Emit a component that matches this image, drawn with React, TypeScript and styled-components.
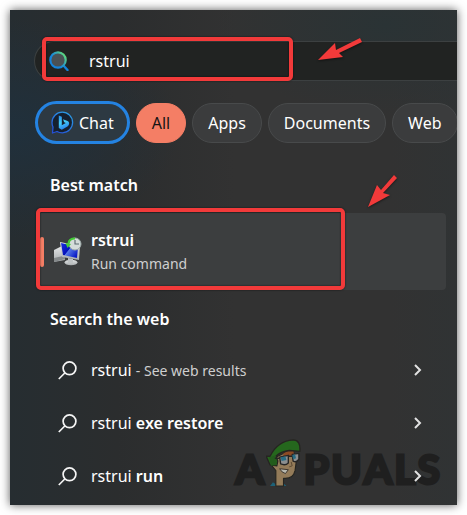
import React, { useState } from "react";
import styled, { createGlobalStyle } from "styled-components";

const RED = "#f23a3a";

const GlobalStyle = createGlobalStyle`
  *, *::before, *::after { box-sizing: border-box; }
  body {
    margin: 0;
    background: #fff;
    color: #fff;
    font-family: "Noto Sans", "Open Sans", sans-serif;
  }
  button, input { font: inherit; color: inherit; }
`;

const Page = styled.div`
  padding: 10px;
`;

const Panel = styled.main`
  position: relative;
  overflow: hidden;
  padding: 31px 0 3px 24px;
  background:
    radial-gradient(ellipse 170px 110px at 0 24%, #20303c 0%, rgba(32, 48, 60, 0) 100%),
    radial-gradient(ellipse 170px 90px at 84% 3%, #2a3335 0%, rgba(42, 51, 53, 0) 100%),
    linear-gradient(90deg, #262d31 0%, #2b2d2e 24%, #323232 50%, #323232 85%, #303334 100%);
`;

const Shadow = styled.div`
  box-shadow: 0 0 9px rgba(0, 0, 0, 0.65);
`;

const SearchBar = styled.label`
  position: relative;
  display: flex;
  align-items: center;
  gap: 20px;
  height: 40px;
  padding-left: 14px;
  border: 1px solid #3c4041;
  border-right: 0;
  border-radius: 20px 0 0 20px;
  background: #212322;
`;

const SearchInput = styled.input`
  flex: 1;
  min-width: 0;
  padding: 0;
  border: 0;
  outline: 0;
  background: transparent;
  font-size: 16px;
  line-height: 24px;
`;

const Highlight = styled.span<{ $inset: string }>`
  position: absolute;
  inset: ${(p) => p.$inset};
  border: 4px solid ${RED};
  border-radius: 5px;
  box-shadow: 0 0 2px rgba(0, 0, 0, 0.7), inset 0 0 2px rgba(0, 0, 0, 0.7);
  pointer-events: none;
`;

const Arrow = styled.svg<{ $top: number; $right: number }>`
  position: absolute;
  top: ${(p) => p.$top}px;
  right: ${(p) => p.$right}px;
  filter: drop-shadow(0 1px 1px rgba(0, 0, 0, 0.5));
  pointer-events: none;
`;

const Filters = styled.nav`
  display: flex;
  align-items: center;
  gap: 6px;
  margin: 20px 0 0 1px;
`;

const Chip = styled.button<{ $kind?: "chat" | "active" }>`
  display: flex;
  flex: none;
  align-items: center;
  gap: 5px;
  height: ${(p) => (p.$kind === "chat" ? 43 : 40)}px;
  padding: 0 ${(p) => (p.$kind === "chat" ? 13 : 15)}px;
  border: ${(p) => (p.$kind === "chat" ? "3px solid #2483e2" : "1px solid #484a4b")};
  ${(p) => p.$kind === "active" && "border-color: #f47e65;"}
  border-radius: 22px;
  background: ${(p) =>
    p.$kind === "active" ? "#f47e65" : p.$kind === "chat" ? "#2d3942" : "#3b3c3d"};
  color: ${(p) => (p.$kind === "active" ? "#141414" : "#fff")};
  font-size: 16px;
  line-height: 24px;
`;

const Heading = styled.h2<{ $above: number; $below: number }>`
  margin: ${(p) => p.$above}px 16px ${(p) => p.$below}px;
  font-size: 16px;
  font-weight: 600;
  line-height: 24px;
`;

const BestMatch = styled.div`
  position: relative;
  margin: 0 11px 0 3px;
`;

const BestButton = styled.button`
  display: flex;
  align-items: center;
  gap: 9px;
  width: 100%;
  height: 77px;
  padding: 0 0 0 3px;
  border: 0;
  border-radius: 4px;
  background: #3c3e3f;
  text-align: left;
`;

const Accent = styled.span`
  width: 4px;
  height: 30px;
  border-radius: 2px;
  background: #f47e65;
`;

const Labels = styled.span`
  display: grid;
`;

const Title = styled.strong`
  font-size: 16px;
  font-weight: 600;
  line-height: 24px;
`;

const Subtitle = styled.span`
  color: #cfcfcf;
  font-size: 14px;
  line-height: 24px;
`;

const Suggestions = styled.ul`
  position: relative;
  z-index: 1;
  display: grid;
  gap: 1px;
  margin: 0;
  padding: 0;
  list-style: none;
`;

const Suggestion = styled.button`
  display: flex;
  align-items: center;
  gap: 14px;
  width: 100%;
  height: 52px;
  padding: 0 35px 0 24px;
  border: 0;
  background: transparent;
  text-align: left;
`;

const SuggestionText = styled.span`
  flex: 1;
  font-size: 16px;
  line-height: 24px;
  b { font-weight: 600; }
  small { color: #cfcfcf; font-size: 14px; }
`;

const Watermark = styled.div`
  position: absolute;
  right: 17px;
  bottom: 18px;
  display: flex;
  align-items: flex-end;
  gap: 2px;
  color: #1f1f1f;
  font-family: Lato, sans-serif;
  font-size: 41px;
  font-weight: 700;
  line-height: 36px;
  -webkit-text-stroke: 3px #1f1f1f;
  stroke-linejoin: round;
`;

const SearchGlyph = () => (
  <svg width="20" height="20" viewBox="0 0 20 20" fill="none" aria-hidden="true">
    <defs>
      <linearGradient id="ring" x1="2" y1="14" x2="16" y2="3" gradientUnits="userSpaceOnUse">
        <stop offset="0.35" stopColor="#1584dc" />
        <stop offset="0.65" stopColor="#35a7b4" />
        <stop offset="1" stopColor="#65df75" />
      </linearGradient>
    </defs>
    <path d="m14 14 4.5 5" stroke="#1383da" strokeWidth="2.4" strokeLinecap="round" />
    <circle cx="9" cy="9" r="7.7" fill="#4b5155" stroke="url(#ring)" strokeWidth="2.2" />
  </svg>
);

const BingGlyph = () => (
  <svg width="23" height="23" viewBox="0 0 23 23" fill="none" aria-hidden="true">
    <defs>
      <linearGradient id="bubble" x1="19" y1="2" x2="5" y2="22" gradientUnits="userSpaceOnUse">
        <stop stopColor="#2a9ee5" />
        <stop offset="1" stopColor="#2450d9" />
      </linearGradient>
      <linearGradient id="bee" x1="8" y1="4" x2="14" y2="19" gradientUnits="userSpaceOnUse">
        <stop stopColor="#2789ef" />
        <stop offset="0.5" stopColor="#44cdf6" />
        <stop offset="1" stopColor="#2374ee" />
      </linearGradient>
    </defs>
    <path
      d="M1.5 22 2 16Q1 14 1 11.5A10.3 10.3 0 1 1 11.5 21.8Q8 21.8 6 20.5Z"
      fill="#15202f"
      stroke="url(#bubble)"
      strokeWidth="1.3"
      strokeLinejoin="round"
    />
    <path
      d="m7.8 4.5 3 1.2v8.6l4-2.2-1.600-.8-1.200-3 4.600 1.800q2.500 1.400 1 4.200-.6 1-2 1.800l-4.800 2.700-3-1.800Z"
      fill="url(#bee)"
    />
  </svg>
);

const RestoreGlyph = () => (
  <svg width="29" height="29" viewBox="0 0 29 29" aria-hidden="true">
    <defs>
      <linearGradient id="screen" x1="0" y1="0" x2="1" y2="0.7">
        <stop stopColor="#192de0" />
        <stop offset="0.5" stopColor="#0511ba" />
        <stop offset="0.54" stopColor="#5578e8" />
        <stop offset="1" stopColor="#0b1bc7" />
      </linearGradient>
      <linearGradient id="shell" x1="0" y1="0" x2="0" y2="1">
        <stop stopColor="#e4e6e7" />
        <stop offset="1" stopColor="#a9adaf" />
      </linearGradient>
    </defs>
    <path d="m1 13 8-4 3 14-11 2Z" fill="url(#shell)" />
    <path d="m1 21 9-2 2 3-11 3Z" fill="#85898b" />
    <ellipse cx="18" cy="25.5" rx="6.5" ry="2.8" fill="url(#shell)" />
    <path d="m15 21 5 1v4h-5Z" fill="#bfc3c5" />
    <path d="m7 5 20 4-1 14-17-3Z" fill="url(#shell)" />
    <path d="m8 6 17 4-1 11-14-3Z" fill="url(#screen)" />
    <circle cx="22" cy="7" r="6" fill="#d5dcda" stroke="#9eaaa9" />
    <path d="M22 1.5q-6 0-6.5 5" fill="none" stroke="#43cc35" strokeWidth="2.2" />
    <path d="m12.5 6 5.5 1-3.500 4Z" fill="#43cc35" />
    <path d="M22 3v4h4" fill="none" stroke="#5b6a70" strokeWidth="1.1" />
  </svg>
);

const Magnifier = () => (
  <svg width="19" height="19" viewBox="0 0 19 19" fill="none" stroke="#f5f5f5" strokeWidth="1.7" aria-hidden="true">
    <circle cx="11.5" cy="7.3" r="6.4" />
    <path d="m6.8 12-6 6" />
  </svg>
);

const Chevron = () => (
  <svg width="8" height="12" viewBox="0 0 8 12" fill="none" stroke="#e2e2e2" strokeWidth="2" aria-hidden="true">
    <path d="m1 1 5 5-5 5" />
  </svg>
);

const Mascot = () => (
  <svg width="36" height="49" viewBox="1 0 37 51" aria-hidden="true">
    <path d="m5 50 3-4 4 3 6-3 4 4Z" fill="#1d6177" />
    <path d="M9 21 27 12l6 7-2 15q-2 9-12 8v8h-8V34l-4-5Z" fill="#937b59" stroke="#252520" strokeWidth="1.2" />
    <path d="m19 16 10-5 1 7-5 1-7 3Z" fill="#8c4b24" />
    <path d="M5 19Q13 3 29 2q8 0 7 12l-11-1q-9 1-14 6l2 5-1 5-7-1-4-9Z" fill="#25671d" stroke="#252520" strokeWidth="1.4" />
    <path d="m4 20 7-2 1 10-6 1Z" fill="#235c1c" />
    <path d="m15 20 9-2v8q-3 3-8 1ZM28 17l7-1v6q-2 4-6 2Z" fill="#8b8f90" stroke="#252525" strokeWidth="1.4" />
    <path d="M10 21h5m9-2h4" stroke="#252525" strokeWidth="1.5" />
    <path d="m16 20 5-1 1 4-5 1Zm12-2 3-1 1 4-3 1Z" fill="#286c83" />
    <path d="m27 25 1 4-3 1" fill="none" stroke="#5b4831" />
    <path d="m15 32 9 1-3 4q-4-1-6-5Z" fill="#b7b7ad" stroke="#39332c" />
  </svg>
);

const suggestions = [
  { tail: <small>- See web results</small>, id: "web" },
  { tail: <b>exe restore</b>, id: "restore" },
  { tail: <b>run</b>, id: "run" },
];

export default function App() {
  const [query, setQuery] = useState("rstrui");
  return (
    <Page>
      <GlobalStyle />
      <Shadow>
        <Panel>
          <SearchBar>
            <SearchGlyph />
            <SearchInput
              type="text"
              aria-label="Search"
              value={query}
              onChange={(e) => setQuery(e.target.value)}
            />
            <Highlight $inset="-5px 164px -1px 7px" />
            <Arrow $top={-7} $right={92} width="48" height="28" viewBox="0 0 48 28" aria-hidden="true">
              <path d="M1 25 18 8l1 7 24-12 2 4-23 11 4 4Z" fill={RED} />
            </Arrow>
          </SearchBar>

          <Filters aria-label="Result type">
            <Chip type="button" $kind="chat"><BingGlyph />Chat</Chip>
            <Chip type="button" $kind="active" aria-pressed="true">All</Chip>
            <Chip type="button">Apps</Chip>
            <Chip type="button">Documents</Chip>
            <Chip type="button">Web</Chip>
          </Filters>

          <Heading $above={29} $below={16}>Best match</Heading>
          <BestMatch>
            <BestButton type="button">
              <Accent />
              <RestoreGlyph />
              <Labels>
                <Title>rstrui</Title>
                <Subtitle>Run command</Subtitle>
              </Labels>
            </BestButton>
            <Highlight $inset="-5px 101px 0 -1px" />
            <Arrow $top={-39} $right={47} width="34" height="36" viewBox="0 0 34 36" aria-hidden="true">
              <path d="m3 33 9-22 4 5L29 1l3 3-14 15 7 2Z" fill={RED} />
            </Arrow>
          </BestMatch>

          <Heading $above={17} $below={13}>Search the web</Heading>
          <Suggestions>
            {suggestions.map(({ tail, id }) => (
              <li key={id}>
                <Suggestion type="button">
                  <Magnifier />
                  <SuggestionText>rstrui {tail}</SuggestionText>
                  <Chevron />
                </Suggestion>
              </li>
            ))}
          </Suggestions>

          <Watermark aria-hidden="true">
            <span>A</span>
            <Mascot />
            {"PUALS".split("").map((letter) => (
              <span key={letter}>{letter}</span>
            ))}
          </Watermark>
        </Panel>
      </Shadow>
    </Page>
  );
}
